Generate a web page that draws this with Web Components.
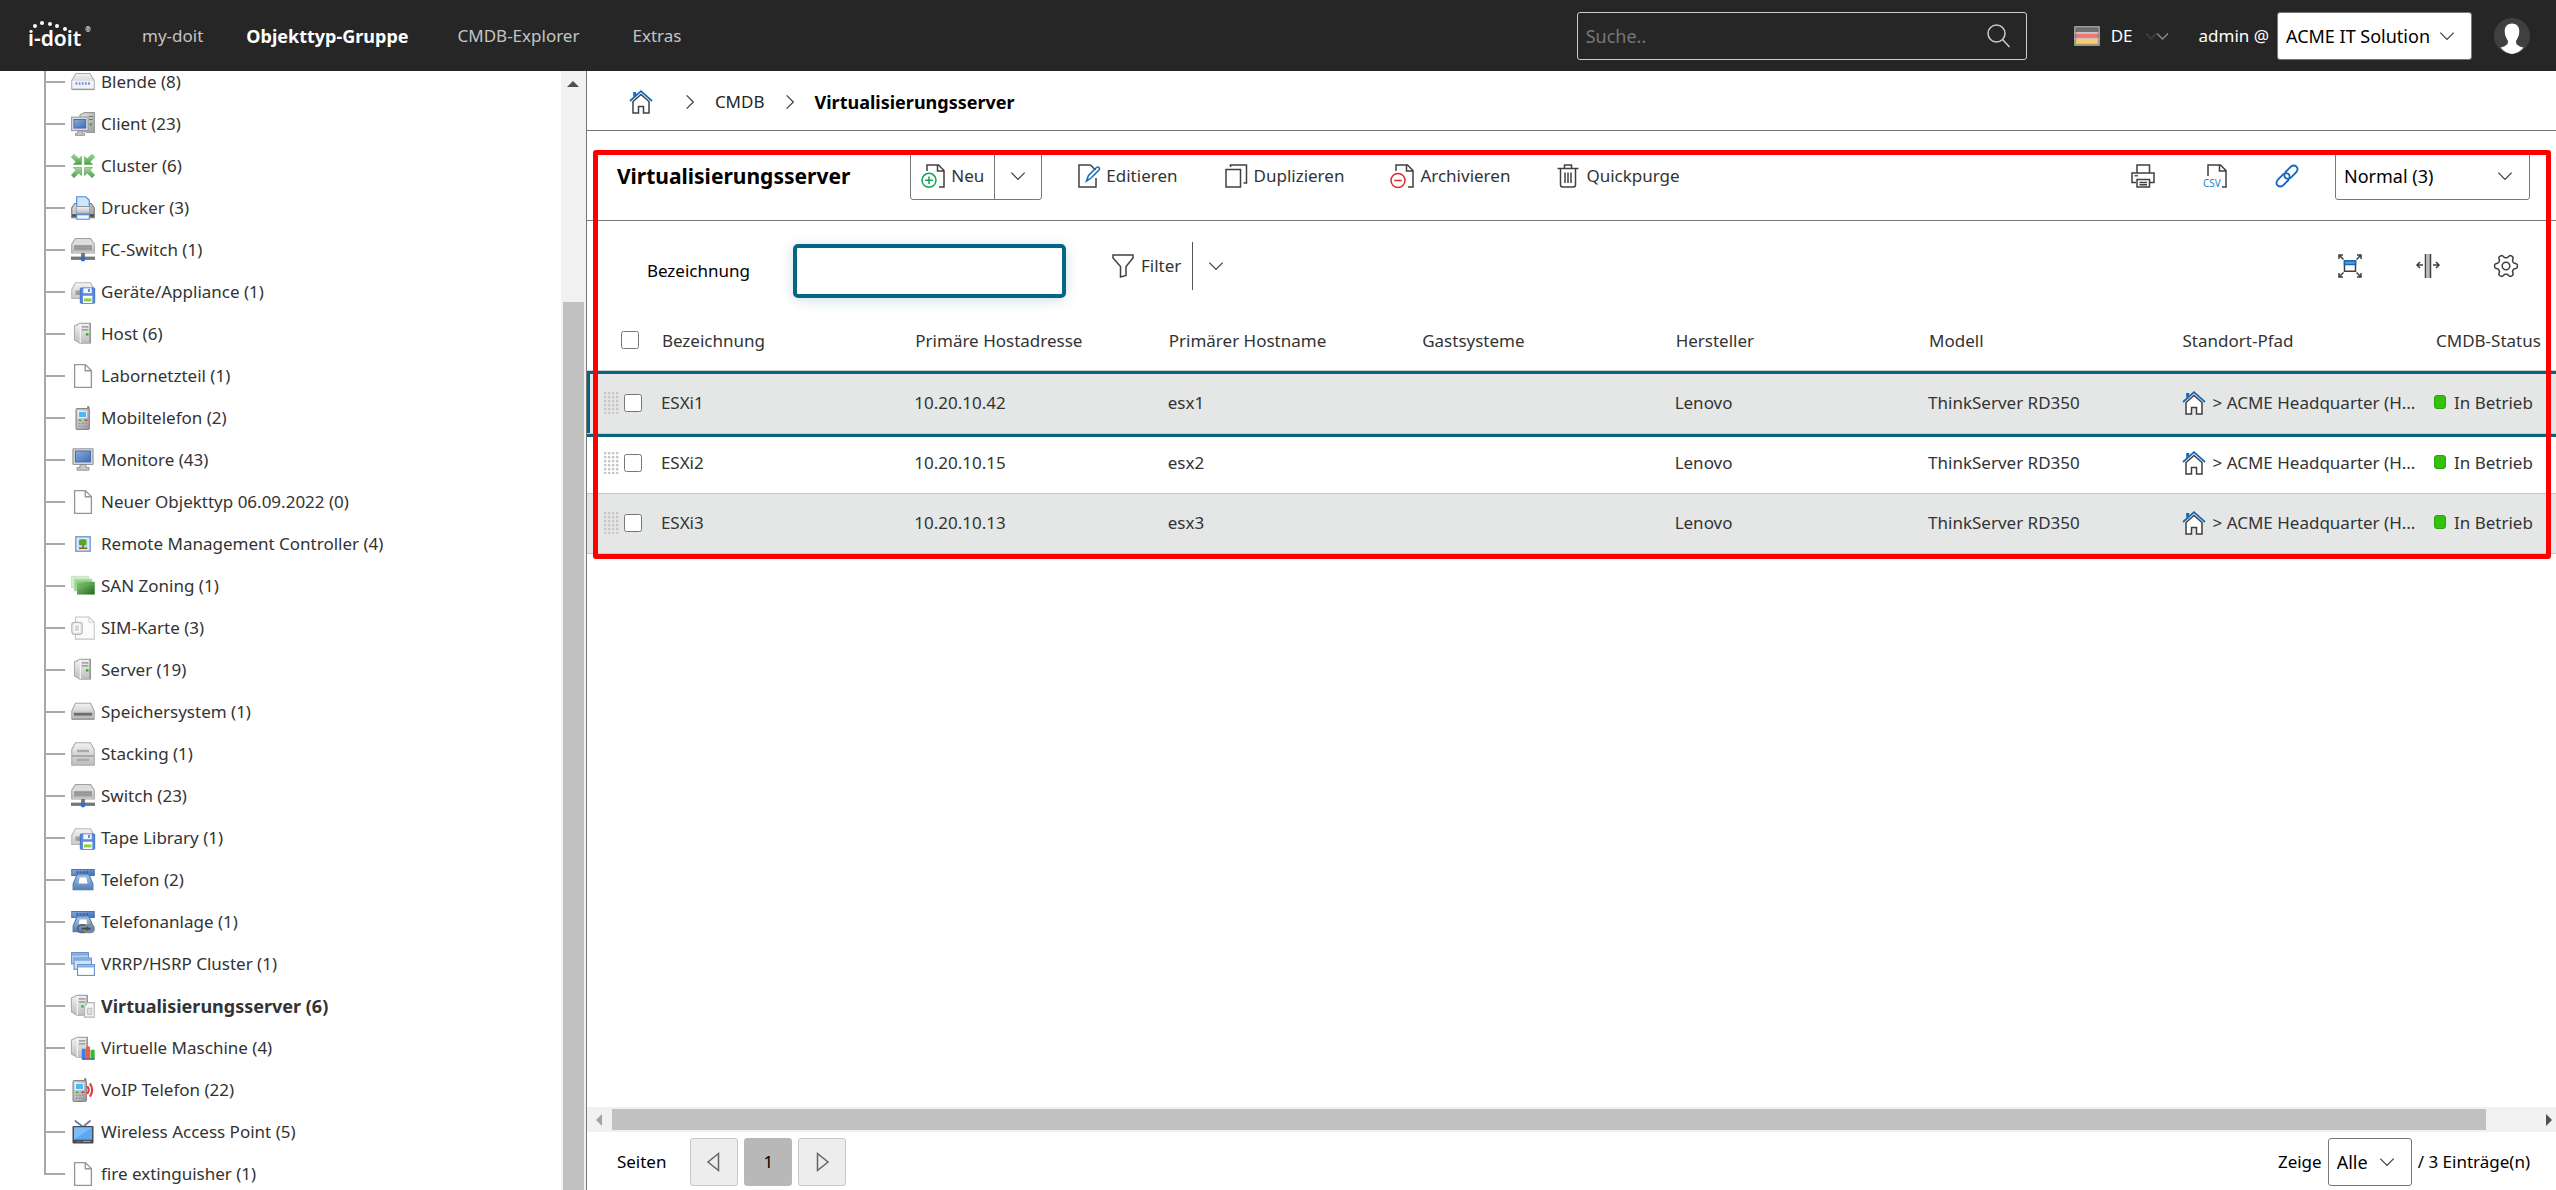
<!DOCTYPE html>
<html lang="de">
<head>
<meta charset="utf-8">
<meta name="viewport" content="width=device-width, initial-scale=1">
<title>i-doit - Virtualisierungsserver</title>
<style>
  html, body {
    height: 100%;
  }
  body {
    margin: 0;
    display: flex;
    flex-direction: column;
    overflow: hidden;
    background: #fff;
    color: #000;
    font-family: "Noto Sans", "Open Sans", sans-serif;
    font-size: 17px;
    line-height: 24px;
  }
</style>
</head>
<body>

<app-header></app-header>

<app-layout>
  <object-tree slot="sidebar">
    <tree-item icon="panel">Blende (8)</tree-item>
    <tree-item icon="client">Client (23)</tree-item>
    <tree-item icon="cluster">Cluster (6)</tree-item>
    <tree-item icon="printer-color">Drucker (3)</tree-item>
    <tree-item icon="switch">FC-Switch (1)</tree-item>
    <tree-item icon="drive-disk">Geräte/Appliance (1)</tree-item>
    <tree-item icon="server">Host (6)</tree-item>
    <tree-item icon="page">Labornetzteil (1)</tree-item>
    <tree-item icon="mobile">Mobiltelefon (2)</tree-item>
    <tree-item icon="monitor">Monitore (43)</tree-item>
    <tree-item icon="page">Neuer Objekttyp 06.09.2022 (0)</tree-item>
    <tree-item icon="remote">Remote Management Controller (4)</tree-item>
    <tree-item icon="zoning">SAN Zoning (1)</tree-item>
    <tree-item icon="sim">SIM-Karte (3)</tree-item>
    <tree-item icon="server">Server (19)</tree-item>
    <tree-item icon="drive">Speichersystem (1)</tree-item>
    <tree-item icon="stack">Stacking (1)</tree-item>
    <tree-item icon="switch">Switch (23)</tree-item>
    <tree-item icon="drive-disk">Tape Library (1)</tree-item>
    <tree-item icon="phone">Telefon (2)</tree-item>
    <tree-item icon="phone-link">Telefonanlage (1)</tree-item>
    <tree-item icon="windows">VRRP/HSRP Cluster (1)</tree-item>
    <tree-item icon="server-card" active>Virtualisierungsserver (6)</tree-item>
    <tree-item icon="server-chart">Virtuelle Maschine (4)</tree-item>
    <tree-item icon="mobile-sound">VoIP Telefon (22)</tree-item>
    <tree-item icon="tv">Wireless Access Point (5)</tree-item>
    <tree-item icon="page" last>fire extinguisher (1)</tree-item>
  </object-tree>

  <bread-crumb></bread-crumb>
  <highlight-frame>
    <object-toolbar></object-toolbar>
    <filter-bar></filter-bar>
    <object-table></object-table>
  </highlight-frame>
  <h-scrollbar></h-scrollbar>
  <page-footer></page-footer>
</app-layout>

<script>
  // gradients shared by the small object type icons
  const DEFS = `
    <defs>
      <linearGradient id="g" x1="0" y1="0" x2="0" y2="1"><stop offset="0" stop-color="#f2f2f2"/><stop offset="1" stop-color="#bdbdbd"/></linearGradient>
      <linearGradient id="m" x1="0" y1="0" x2="1" y2="1"><stop offset="0" stop-color="#e4e4e4"/><stop offset="1" stop-color="#9b9b9b"/></linearGradient>
      <linearGradient id="b" x1="0" y1="0" x2="1" y2="1"><stop offset="0" stop-color="#87aade"/><stop offset="1" stop-color="#3f6fb5"/></linearGradient>
      <linearGradient id="p" x1="0" y1="0" x2="0" y2="1"><stop offset="0" stop-color="#a9c6e6"/><stop offset="1" stop-color="#4f7fb8"/></linearGradient>
      <linearGradient id="k" x1="0" y1="0" x2="0" y2="1"><stop offset="0" stop-color="#9fdc9a"/><stop offset="1" stop-color="#4d9e4a"/></linearGradient>
      <linearGradient id="z" x1="0" y1="0" x2="1" y2="1"><stop offset="0" stop-color="#8fca82"/><stop offset="1" stop-color="#1c6b1c"/></linearGradient>
    </defs>`;

  const SERVER = `
    <path d="M2.3 2.6 6 .9h7v13.3H6L2.3 12z" fill="url(#g)" stroke="#a9a9a9" stroke-width=".7"/>
    <path d="M6.2 1.2v12.8" stroke="#f7f7f7" stroke-width=".8"/>
    <path d="M7.2 3.3h4.4M7.2 5.3h4.4" stroke="#8d8d8d" stroke-width=".8"/>
    <path d="M12.7 1v13" stroke="#8d8d8d" stroke-width=".8"/>`;
  const MOBILE = `
    <path d="M11.5 .2v4" stroke="#6d6d6d" stroke-width="1.4"/>
    <rect x="3.4" y="1.8" width="8.8" height="13.8" rx=".8" fill="url(#m)" stroke="#868686" stroke-width=".8"/>
    <rect x="5" y="3.6" width="5.4" height="4" fill="#4db8f5" stroke="#fff" stroke-width=".5"/>
    <path d="M5 9.5h2" stroke="#35b34a"/><path d="M9 9.5h2" stroke="#d9363a"/>
    <path d="M5 11.5h1.3m.9 0h1.3m.9 0h1.3M5 13.500h1.3m.9 0h1.3m.9 0h1.3" stroke="#8c8c8c" stroke-width=".8"/>`;
  const PHONE = `
    <path d="M.5 1h15v4H12l-.5-1.3h-7L4 5H.5z" fill="url(#b)" stroke="#4a78ad" stroke-width=".7"/>
    <path d="M4 4.5h8l2.6 6v4H1.4v-4z" fill="url(#p)" stroke="#4a78ad" stroke-width=".7"/>
    <path d="M5.8 6.3h4.4l.8 4H5z" fill="#fff"/>
    <path d="M3.5 2.8h9" stroke="#2e5f9c" stroke-width="1.2" stroke-dasharray="1.2 1"/>`;
  const HOME = `
    <path d="M4 11.5V23h5.500v-6.500h5V23H20V11.500L12 4.500z" stroke="#404040" stroke-width="1.5" fill="#fff"/>
    <path d="M1 11 12 1.2 23 11" stroke="#1169bd" stroke-width="1.7" fill="none"/>
    <path d="M4.2 2h3v2.500l-3 2.600z" fill="#1169bd" stroke="none"/>`;

  // cog outline with six rounded teeth
  const GEAR = Array.from({ length: 72 }, (_, i) => {
    const a = i * Math.PI / 36;
    const r = 9.8 + 1.7 * Math.tanh(2 * Math.cos(6 * a));
    return `${i ? 'L' : 'M'}${(12 + r * Math.cos(a)).toFixed(2)} ${(12 + r * Math.sin(a)).toFixed(2)}`;
  }).join('') + 'z';

  const ICONS = {
    // object types, drawn on a 16 unit grid
    'panel': [16, `<path d="M3.4 2.3h9.2l2.9 4.7v5.8H.5V7z" fill="url(#g)" stroke="#adadad" stroke-width=".7"/><path d="M.9 7.2h14.2v5.2H.9z" fill="#f4f4f4"/><path d="M3 9h10" stroke="#6c93d8" stroke-width="1.8" stroke-dasharray="1.2 .9"/><path d="M.5 13h15" stroke="#9a9a9a" stroke-width=".8"/>`],
    'client': [16, `<path d="M6 2 9 .4h6.600v13.200H11L6 12z" fill="url(#m)" stroke="#989898" stroke-width=".7"/><path d="M12 3h2.600M12 5h2.600" stroke="#777" stroke-width=".7"/><path d="M13.200 7.500v1.500" stroke="#28b428" stroke-width="1.6"/><rect x=".4" y="3.4" width="11" height="9" fill="#dcdcdc" stroke="#999" stroke-width=".7"/><rect x="2" y="5" width="7.8" height="5.7" fill="url(#b)" stroke="#3d66a3" stroke-width=".6"/><path d="M4.500 12.500h3v1.700h1.500v1.400H3v-1.400h1.500z" fill="#c4c4c4" stroke="#858585" stroke-width=".5"/>`],
    'cluster': [16, `<g fill="url(#k)" stroke="#58a956" stroke-width=".4"><path d="M2 .2 5.200 3.300 7 1.500V7H1.500l1.800-1.800L.2 2z"/><path d="M14 .2 10.800 3.300 9 1.500V7h5.500l-1.800-1.800L15.800 2z"/><path d="M2 15.800l3.200-3.100L7 14.500V9H1.500l1.800 1.800L.2 14z"/><path d="M14 15.800l-3.200-3.100L9 14.500V9h5.500l-1.800 1.800 3.100 3.200z"/></g>`],
    'printer-color': [16, `<path d="M2.500 5h11l2 3v6.500H.5V8z" fill="url(#m)" stroke="#737373" stroke-width=".7"/><path d="M3.800 7V.5h6l2.400 2.400V7z" fill="#cfe5fb" stroke="#4b8fdb" stroke-width=".8"/><path d="M3.500 7h9v4.500h-9z" fill="url(#g)" stroke="#888" stroke-width=".5"/><path d="M.6 13h14.800" stroke="#525252" stroke-width="1.8"/><rect x="3.8" y="12.5" width="8.4" height="3" fill="#eef6ff" stroke="#4b8fdb" stroke-width=".7"/>`],
    'switch': [16, `<path d="M3 .4h10l2.500 3.600v6H.5V4z" fill="url(#g)" stroke="#a0a0a0" stroke-width=".7"/><path d="M3.400 1.200h9.200l1.400 2.300H2z" fill="#dcdcdc"/><rect x="2" y="4.600" width="12" height="3.800" fill="#a4a4a4"/><path d="M2 5.800h12M2 7.200h12" stroke="#8a8a8a" stroke-width=".5"/><path d="M.8 9.500h14.400" stroke="#c9c9c9" stroke-width=".8"/><path d="M8 10v3" stroke="#777" stroke-width="2.6"/><path d="M0 13.500h16" stroke="#777" stroke-width="2.2"/><circle cx="8" cy="14" r="1.6" fill="#2e6ae0"/>`],
    'drive-disk': [16, `<g opacity=".8"><path d="M3 1.800h10l2.500 4.500v6H.5v-6z" fill="url(#g)" stroke="#a5a5a5" stroke-width=".7"/><path d="M3 8.500h5" stroke="#888" stroke-width="3"/></g><rect x="6.2" y="5.3" width="9.6" height="10.2" rx=".5" fill="#5b8cdc" stroke="#3a6ac0" stroke-width=".6"/><path d="M8.200 5.500h5.600v3.300H8.200z" fill="#f3f7ff"/><path d="M12 6v2" stroke="#3a6ac0"/><path d="M8 10.500h6.200v4.800H8z" fill="#fff"/><path d="M8.600 13.300h5" stroke="#8ad13c" stroke-width="2"/>`],
    'server': [16, SERVER + `<path d="M10.800 7.500v1.600" stroke="#28b428" stroke-width="1.8"/>`],
    'page': [16, `<path d="M2.400 .4h7.200l4 4v11.200H2.400z" fill="#fff" stroke="#969696" stroke-width=".9"/><path d="M9.500 .5v4h4" fill="none" stroke="#969696" stroke-width=".9"/>`],
    'mobile': [16, MOBILE],
    'monitor': [16, `<rect x="1.3" y=".5" width="13.4" height="10.5" rx=".5" fill="#d4d4d4" stroke="#999" stroke-width=".8"/><rect x="3" y="2" width="10" height="7.3" fill="url(#b)" stroke="#3d66a3" stroke-width=".6"/><path d="M6 11h4v2h2v1.800H4V13h2z" fill="#c8c8c8" stroke="#808080" stroke-width=".5"/>`],
    'remote': [16, `<rect x="3.2" y="3.2" width="9.6" height="9.6" fill="#dfeafb" stroke="#7c9fd3"/><rect x="5" y="5" width="6" height="6" fill="#b9dcf0"/><rect x="5.3" y="4.9" width="5" height="4" rx="1" fill="#5aa52a"/><path d="M8 8.500V11M5.300 10.800h5.500" stroke="#8a5f22"/>`],
    'zoning': [16, `<rect x=".3" y="1.5" width="11.5" height="7.5" fill="#d5edd0" stroke="#c2e0bc" stroke-width=".5"/><rect x="2" y="3.3" width="12" height="8" fill="#9ed294" stroke="#c6e8c0" stroke-width=".6"/><rect x="4" y="5.2" width="11.8" height="8.5" fill="url(#z)"/><path d="M4.500 7h11" stroke="#5fae55" stroke-width=".5"/>`],
    'sim': [16, `<path d="M3 .6h9l3.500 3.500v11.300H3z" fill="#fbfbfb" stroke="#c4c4c4" stroke-width=".7"/><path d="M12 .6v3.600h3.500" fill="none" stroke="#cfcfcf" stroke-width=".7"/><rect x=".5" y="4.2" width="7" height="8" rx="1.8" fill="#ececec" stroke="#b9b9b9" stroke-width=".8"/><rect x="2.3" y="6" width="3.4" height="4.4" fill="#d6d6d6" stroke="#fff" stroke-width=".6"/>`],
    'drive': [16, `<path d="M3 2.200h10l2.500 5.200V12.500H.5V7.400z" fill="url(#g)" stroke="#a5a5a5" stroke-width=".7"/><path d="M1 7.800h14v4.600H1z" fill="#bdbdbd"/><path d="M2 9.500h12" stroke="#6d6d6d" stroke-width="1.8"/><path d="M.5 12.800h15" stroke="#8a8a8a" stroke-width=".8"/>`],
    'stack': [16, `<path d="M3 .5h10l2.500 4.500v10.500H.5V5z" fill="url(#g)" stroke="#a9a9a9" stroke-width=".7"/><path d="M.6 9.300h14.800" stroke="#969696" stroke-width=".9"/><path d="M4 6h8M4 12h8" stroke="#aaa" stroke-width="1.6"/>`],
    'phone': [16, PHONE],
    'phone-link': [16, PHONE + `<rect x="4.5" y="10" width="6.5" height="4.8" rx="2.2" fill="none" stroke="#666" stroke-width="1.3"/><rect x="9" y="10" width="6.3" height="4.8" rx="2.2" fill="none" stroke="#8a8a8a" stroke-width="1.3"/><path d="M7 12.400h6" stroke="#444" stroke-width="1.2"/>`],
    'windows': [16, `<g stroke="#5f8ccb" stroke-width=".7"><rect x=".4" y=".4" width="11.2" height="7.5" fill="#b7d2f3"/><rect x="2" y="4" width="11.6" height="7.5" fill="#cfe1f8"/><rect x="4.4" y="8.4" width="11.2" height="7.2" fill="#fff"/></g><path d="M.8 1.500h10.400M2.400 5.100h10.800M4.800 9.500h10.400" stroke="#7fa9e2" stroke-width="1.5"/>`],
    'server-card': [16, `<g transform="translate(-2 0)">${SERVER}</g><path d="M7.600 7.500v1.600" stroke="#28b428" stroke-width="1.4"/><path d="M9 8.200 11 5.800h4.500v9.600H9z" fill="#f5f5f5" stroke="#b5b5b5" stroke-width=".8"/><path d="M11 9.500h2.800v4.200H11z" fill="#dedede" stroke="#bbb" stroke-width=".6"/>`],
    'server-chart': [16, `<g transform="translate(-2 0)">${SERVER}</g><path d="M7.200 8.500h2.600v7H7.200z" fill="#3e7df0"/><path d="M10 7h2.700v8.500H10z" fill="#e8623e"/><path d="M13 9.200h2.800v6.300H13z" fill="#3fb43a"/><path d="M7.200 15.400h8.600" stroke="#36539c" stroke-width=".8"/>`],
    'mobile-sound': [16, `<g transform="translate(-2 0)">${MOBILE}</g><path d="M10.800 5.500q2 2.500 0 5M12.600 3.600q3 4.400 0 8.800" fill="none" stroke="#e03a3f" stroke-width="1.4"/>`],
    'tv': [16, `<path d="M2.500 .3 7.500 4.200M13 .3 8.500 4.200" stroke="#6c7fa0" stroke-width="1.2"/><rect x="1" y="4" width="14" height="11.6" rx=".5" fill="#4b4b52"/><rect x="2" y="4.9" width="12" height="8.2" fill="#5aa9f2"/><path d="M2 13V5h12z" fill="#7bbdf8"/><path d="M4 14.300h3" stroke="#d33" stroke-width=".8"/><path d="M8 14.300h5" stroke="#999" stroke-width=".8"/>`],

    // line icons on a 24 unit grid
    'home': [24, HOME],
    'chevron-right': [24, `<path d="M8 4 16 12l-8 8"/>`],
    'chevron-down': [24, `<path d="M4 8 12 16 20 8"/>`],
    'chevron-lang': [24, `<path d="M1 9.500 6 15l5-5.500" stroke="#444"/><path d="M12 9.500 17.500 15 23 9.500" stroke="#888"/>`],
    'search': [24, `<circle cx="10.5" cy="9.5" r="8.5"/><path d="M16.500 15.500 23.500 23"/>`],
    'doc-new': [24, `<path d="M6 7V1h11.500L23 6.500V23h-5M16.500 1v6H23"/><g stroke="#0ba84e"><circle cx="8" cy="16.3" r="7"/><path d="M8 12.500v7.600M4.200 16.300h7.600"/></g>`],
    'doc-archive': [24, `<path d="M6 7V1h11.500L23 6.500V23h-5M16.500 1v6H23"/><g stroke="#dc2b2b"><circle cx="8" cy="16.5" r="7"/><path d="M4.200 16.500h7.600"/></g>`],
    'doc-edit': [24, `<path d="M14.500 1H3v22h17V14M14.500 1l5 5"/><path d="m10.500 17 2-5.500 8-8q1.500-1 2.500 0t0 2.500l-8 8z" stroke="#1169bd"/>`],
    'copy': [24, `<path d="M2 5.500h14.500v17.500H2zM6.500 3V1h16v18h-3"/>`],
    'trash': [24, `<path d="M1.500 4.500h21M8.500 4V1h7V4M4.500 5v15.500q0 2.500 2 2.500h11q2 0 2-2.500V5M9 8.500v10.500M12 8.500v10.500M15 8.500v10.500"/>`],
    'printer': [24, `<path d="M6 9V1h12.500v8M5 18.500H1V9h22v9.500h-4M6 15.500h12.500v7.500H6zM8.500 18.500h7.500M8.500 20.800h7.500"/><path d="M3.500 11.700H7" stroke="#1169bd"/>`],
    'link': [24, `<g stroke="#1169bd" stroke-width="1.8"><path d="m10 8.500 6-6q2.800-2 5.300 0t0 5.700l-5.600 5.600q-2.700 2-5.400 0-1.500-1.800-.6-4"/><path d="m14 15.500-6 6q-2.800 2-5.300 0t0-5.700l5.600-5.600q2.700-2 5.400 0 1.500 1.800.6 4"/></g>`],
    'filter': [24, `<path d="M2 1h20v3L15 12.500v9L9.500 23V12.500L2 4z"/>`],
    'expand': [24, `<path d="M6.500 7h11v10.300h-11z"/><path d="M6.500 7h11v3.500h-11z" fill="#5d9edb" stroke="#1169bd"/><path d="M1 5V1h4M1 1l4.500 4.500M19 1h4v4M23 1l-4.500 4.500M1 19v4h4M1 23l4.500-4.500M19 23h4v-4M23 23l-4.500-4.500"/>`],
    'columns': [24, `<path d="M10.500 0h4v24h-4z" fill="#bbb" stroke="none"/><path d="M9.500 0v24M14.500 0v24M7 11H1M4 8l-3 3 3 3M17 11h6M20 8l3 3-3 3"/>`],
    'gear': [24, `<path d="${GEAR}" stroke-linejoin="round"/><circle cx="12" cy="12" r="3.8"/>`],
    'prev': [24, `<path d="M16.500 3.500v17L6 12z" stroke="#666"/>`],
    'next': [24, `<path d="M7.500 3.500v17L18 12z" stroke="#666"/>`],
    'csv': [24, `<path d="M5 12V1h12.500L23 6.500V23h-4M16.500 1v6H23"/><text x="0" y="23" font-size="10" fill="#1a86cf" stroke="none">CSV</text>`],
    'flag': [24, `<path d="M0 3h24v6H0z" fill="#707070"/><path d="M0 9h24v6H0z" fill="#f2757a"/><path d="M0 15h24v6H0z" fill="#f6cf6c"/><path d="M.5 3.500h23v17H.5z" fill="none" stroke="#000" stroke-opacity=".25"/>`],
    'avatar': [36, `<circle cx="18" cy="18" r="18" fill="#404040"/><path d="M18 5.500c5 0 7.500 3.500 7.300 8.500-.2 4-1.800 6.500-3.300 9 0 3 1 5 7.500 6.500A18 18 0 0 1 18 36 18 18 0 0 1 6.500 29.500C13 28 14 26 14 23c-1.500-2.500-3.100-5-3.300-9-.2-5 2.300-8.500 7.300-8.500z" fill="#fff"/>`]
  };

  class AppIcon extends HTMLElement {
    connectedCallback() {
      const [grid, shapes] = ICONS[this.getAttribute('name')];
      this.attachShadow({ mode: 'open' });
      this.shadowRoot.innerHTML = `
        <style>
          :host {
            display: inline-block;
            flex: none;
            width: var(--icon-size, 24px);
            height: var(--icon-size, 24px);
          }
          svg {
            display: block;
            width: 100%;
            height: 100%;
            overflow: visible;
          }
          .line {
            fill: none;
            stroke: var(--icon-color, #404040);
            stroke-width: 1.5px;
          }
        </style>
        <svg viewBox="0 0 ${grid} ${grid}" class="${grid === 24 ? 'line' : ''}" aria-hidden="true">
          ${grid === 16 ? DEFS : ''}${shapes}
        </svg>
      `;
    }
  }
  customElements.define('app-icon', AppIcon);

  class SelectBox extends HTMLElement {
    connectedCallback() {
      this.attachShadow({ mode: 'open' });
      this.shadowRoot.innerHTML = `
        <style>
          :host {
            display: inline-grid;
            align-items: center;
            --icon-size: 20px;
          }
          select, app-icon {
            grid-area: 1 / 1;
          }
          select {
            appearance: none;
            box-sizing: border-box;
            width: 100%;
            height: 48px;
            padding: 0 40px 0 8px;
            border: 1px solid #777;
            border-radius: 3px;
            background: #fff;
            color: #000;
            font: inherit;
            font-size: 18px;
          }
          app-icon {
            justify-self: end;
            margin-right: 15px;
            pointer-events: none;
          }
        </style>
        <select aria-label="${this.getAttribute('label')}">
          <option>${this.getAttribute('value')}</option>
        </select>
        <app-icon name="chevron-down"></app-icon>
      `;
    }
  }
  customElements.define('select-box', SelectBox);

  class AppLogo extends HTMLElement {
    connectedCallback() {
      this.attachShadow({ mode: 'open' });
      this.shadowRoot.innerHTML = `
        <style>
          :host {
            display: block;
          }
          a {
            display: block;
            color: #fff;
          }
          svg {
            display: block;
            overflow: visible;
          }
          text {
            font-family: "Noto Sans", sans-serif;
            font-weight: 600;
          }
        </style>
        <a href="#" aria-label="i-doit">
          <svg width="64" height="40" viewBox="0 -4 64 40" fill="#fff">
            <circle cx="7" cy="6" r="2"/>
            <circle cx="14" cy="3" r="2"/>
            <circle cx="22" cy="4" r="2"/>
            <circle cx="29" cy="6" r="2"/>
            <circle cx="37" cy="9" r="2"/>
            <text x="0" y="26" font-size="21">i-doit</text>
            <text x="57" y="12" font-size="7">®</text>
          </svg>
        </a>
      `;
    }
  }
  customElements.define('app-logo', AppLogo);

  class AppHeader extends HTMLElement {
    connectedCallback() {
      this.attachShadow({ mode: 'open' });
      this.shadowRoot.innerHTML = `
        <style>
          :host {
            display: flex;
            align-items: center;
            flex: none;
            height: 71px;
            padding: 0 26px 0 28px;
            background: #262626;
            color: #fff;
            --icon-color: #ccc;
          }
          nav {
            display: flex;
            gap: 53px;
            margin-left: 50px;
          }
          nav a {
            color: #c4c4c4;
            text-decoration: none;
          }
          nav a.active {
            margin: 0 -4px 0 -10px;
            color: #fff;
            font-size: 18px;
            font-weight: bold;
          }
          .search {
            display: flex;
            align-items: center;
            box-sizing: border-box;
            width: 450px;
            height: 48px;
            margin-left: auto;
            padding: 0 16px 0 8px;
            border: 1px solid #ccc;
            border-radius: 3px;
          }
          .search input {
            flex: 1;
            min-width: 0;
            border: 0;
            padding: 0;
            outline: 0;
            background: none;
            color: #fff;
            font: inherit;
            font-size: 18px;
          }
          .search input::placeholder {
            color: #777;
          }
          button {
            display: flex;
            align-items: center;
            padding: 0;
            border: 0;
            background: none;
            color: inherit;
            font: inherit;
          }
          .lang {
            gap: 12px;
            margin-left: 48px;
          }
          .user {
            margin: 0 8px 0 30px;
          }
          .tenant {
            width: 195px;
            margin-right: 22px;
            --icon-color: #404040;
          }
          .avatar {
            --icon-size: 36px;
          }
        </style>
        <app-logo></app-logo>
        <nav>
          <a href="#">my-doit</a>
          <a href="#" class="active">Objekttyp-Gruppe</a>
          <a href="#">CMDB-Explorer</a>
          <a href="#">Extras</a>
        </nav>
        <div class="search">
          <input type="text" placeholder="Suche.." aria-label="Suche">
          <button aria-label="Suchen"><app-icon name="search"></app-icon></button>
        </div>
        <button class="lang"><app-icon name="flag"></app-icon>DE<app-icon name="chevron-lang"></app-icon></button>
        <span class="user">admin @</span>
        <select-box class="tenant" label="Mandant" value="ACME IT Solutions"></select-box>
        <button class="avatar" aria-label="Profil"><app-icon name="avatar"></app-icon></button>
      `;
    }
  }
  customElements.define('app-header', AppHeader);

  class AppLayout extends HTMLElement {
    connectedCallback() {
      this.attachShadow({ mode: 'open' });
      this.shadowRoot.innerHTML = `
        <style>
          :host {
            display: flex;
            flex: 1;
            min-height: 0;
          }
          aside {
            display: flex;
            width: calc(23% - 2px);
            border-right: 1px solid #777;
          }
          main {
            display: flex;
            flex: 1;
            flex-direction: column;
            min-width: 0;
          }
        </style>
        <aside><slot name="sidebar"></slot></aside>
        <main><slot></slot></main>
      `;
    }
  }
  customElements.define('app-layout', AppLayout);

  class ObjectTree extends HTMLElement {
    connectedCallback() {
      this.attachShadow({ mode: 'open' });
      this.shadowRoot.innerHTML = `
        <style>
          :host {
            display: flex;
            flex: 1;
            min-width: 0;
            overflow: hidden;
          }
          nav {
            flex: 1;
            margin-top: -10px;
            padding-left: 44px;
          }
          .bar {
            display: flex;
            flex-direction: column;
            align-items: center;
            width: 25px;
            background: #f1f1f1;
          }
          .up {
            margin: 10px 0 215px;
            border: 6px solid transparent;
            border-top: 0;
            border-bottom-color: #505050;
          }
          .thumb {
            flex: 1;
            width: 21px;
            background: #c1c1c1;
          }
        </style>
        <nav><slot></slot></nav>
        <div class="bar"><span class="up"></span><span class="thumb"></span></div>
      `;
    }
  }
  customElements.define('object-tree', ObjectTree);

  class TreeItem extends HTMLElement {
    connectedCallback() {
      this.attachShadow({ mode: 'open' });
      this.shadowRoot.innerHTML = `
        <style>
          :host {
            display: flex;
            height: 42px;
          }
          :host([active]) a {
            font-size: 18px;
            font-weight: bold;
          }
          .branch {
            display: flex;
            flex-direction: column;
            width: 21px;
            margin-right: 6px;
          }
          .branch i {
            height: 20px;
            border-left: 2px solid #a8a8a8;
          }
          .branch i:first-child {
            border-bottom: 2px solid #a8a8a8;
          }
          :host([last]) i:last-child {
            border-color: transparent;
          }
          a {
            display: flex;
            align-items: center;
            gap: 6px;
            color: #333;
            text-decoration: none;
          }
        </style>
        <span class="branch"><i></i><i></i></span>
        <a href="#"><app-icon name="${this.getAttribute('icon')}"></app-icon><span><slot></slot></span></a>
      `;
    }
  }
  customElements.define('tree-item', TreeItem);

  class BreadCrumb extends HTMLElement {
    connectedCallback() {
      this.attachShadow({ mode: 'open' });
      this.shadowRoot.innerHTML = `
        <style>
          :host {
            display: flex;
            align-items: center;
            flex: none;
            box-sizing: border-box;
            height: 60px;
            padding: 2px 42px 0;
            border-bottom: 1px solid #777;
          }
          a {
            color: #262626;
            text-decoration: none;
          }
          .home {
            display: flex;
            margin-right: 27px;
          }
          .sep {
            --icon-size: 20px;
            margin-right: 15px;
          }
          .sep + a {
            margin-right: 15px;
          }
          b {
            font-size: 18px;
          }
        </style>
        <a href="#" class="home" aria-label="Startseite"><app-icon name="home"></app-icon></a>
        <app-icon class="sep" name="chevron-right"></app-icon>
        <a href="#">CMDB</a>
        <app-icon class="sep" name="chevron-right"></app-icon>
        <b>Virtualisierungsserver</b>
      `;
    }
  }
  customElements.define('bread-crumb', BreadCrumb);

  class HighlightFrame extends HTMLElement {
    connectedCallback() {
      this.attachShadow({ mode: 'open' });
      this.shadowRoot.innerHTML = `
        <style>
          :host {
            display: block;
            position: relative;
            margin-bottom: auto;
          }
          .frame {
            position: absolute;
            inset: 19px 5px -5px 6px;
            border: 5px solid #f00;
            border-radius: 3px;
            pointer-events: none;
          }
        </style>
        <slot></slot>
        <div class="frame"></div>
      `;
    }
  }
  customElements.define('highlight-frame', HighlightFrame);

  class ToolButton extends HTMLElement {
    connectedCallback() {
      this.attachShadow({ mode: 'open' });
      this.shadowRoot.innerHTML = `
        <style>
          :host {
            display: inline-flex;
          }
          button {
            display: flex;
            align-items: center;
            gap: 6px;
            height: 48px;
            padding: 0;
            border: 0;
            background: none;
            color: #333;
            font: inherit;
          }
        </style>
        <button ${this.hasAttribute('label') ? `aria-label="${this.getAttribute('label')}"` : ''}>
          <app-icon name="${this.getAttribute('icon')}"></app-icon>
          <slot></slot>
        </button>
      `;
    }
  }
  customElements.define('tool-button', ToolButton);

  class ObjectToolbar extends HTMLElement {
    connectedCallback() {
      this.attachShadow({ mode: 'open' });
      this.shadowRoot.innerHTML = `
        <style>
          :host {
            display: flex;
            align-items: center;
            box-sizing: border-box;
            height: 90px;
            padding: 0 26px 0 30px;
            border-bottom: 1px solid #777;
          }
          h1 {
            margin: 0 60px 0 0;
            font-size: 21px;
          }
          .split {
            display: flex;
            align-items: center;
            box-sizing: border-box;
            height: 48px;
            margin-right: 34px;
            border: 1px solid #777;
            border-radius: 3px;
          }
          .split tool-button {
            padding: 0 10px;
          }
          .split tool-button + tool-button {
            align-items: center;
            width: 20px;
            height: 46px;
            padding: 0 13px;
            border-left: 1px solid #777;
            --icon-size: 20px;
          }
          .actions {
            display: flex;
            gap: 46px;
          }
          .tools {
            display: flex;
            gap: 48px;
            margin-left: auto;
          }
          .tools select-box {
            width: 195px;
            margin-left: -12px;
          }
        </style>
        <h1>Virtualisierungsserver</h1>
        <div class="split">
          <tool-button icon="doc-new">Neu</tool-button>
          <tool-button icon="chevron-down" label="Weitere"></tool-button>
        </div>
        <div class="actions">
          <tool-button icon="doc-edit">Editieren</tool-button>
          <tool-button icon="copy">Duplizieren</tool-button>
          <tool-button icon="doc-archive">Archivieren</tool-button>
          <tool-button icon="trash">Quickpurge</tool-button>
        </div>
        <div class="tools">
          <tool-button icon="printer" label="Drucken"></tool-button>
          <tool-button icon="csv" label="Exportieren"></tool-button>
          <tool-button icon="link" label="Link"></tool-button>
          <select-box label="Status" value="Normal (3)"></select-box>
        </div>
      `;
    }
  }
  customElements.define('object-toolbar', ObjectToolbar);

  class FilterBar extends HTMLElement {
    connectedCallback() {
      this.attachShadow({ mode: 'open' });
      this.shadowRoot.innerHTML = `
        <style>
          :host {
            display: flex;
            align-items: center;
            height: 90px;
            padding: 0 38px 0 60px;
          }
          .field {
            display: flex;
            align-items: center;
            gap: 43px;
            padding-top: 10px;
          }
          input {
            box-sizing: border-box;
            width: 273px;
            height: 54px;
            padding: 0 10px;
            border: 4px solid #056583;
            border-radius: 5px;
            outline: 0;
            box-shadow: 0 2px 14px rgba(5, 101, 131, .2);
            font: inherit;
          }
          .filter {
            margin-left: 45px;
            padding-right: 11px;
            border-right: 1px solid #555;
          }
          .more {
            margin-left: 13px;
            --icon-size: 20px;
          }
          .tools {
            display: flex;
            gap: 54px;
            margin-left: auto;
          }
        </style>
        <div class="field">
          <label for="name">Bezeichnung</label>
          <input id="name" type="text">
        </div>
        <tool-button class="filter" icon="filter">Filter</tool-button>
        <tool-button class="more" icon="chevron-down" label="Weitere Filter"></tool-button>
        <div class="tools">
          <tool-button icon="expand" label="Vollbild"></tool-button>
          <tool-button icon="columns" label="Spaltenbreite"></tool-button>
          <tool-button icon="gear" label="Einstellungen"></tool-button>
        </div>
      `;
    }
  }
  customElements.define('filter-bar', FilterBar);

  class ObjectTable extends HTMLElement {
    connectedCallback() {
      const columns = ['Bezeichnung', 'Primäre Hostadresse', 'Primärer Hostname', 'Gastsysteme', 'Hersteller', 'Modell', 'Standort-Pfad', 'CMDB-Status'];
      const rows = [
        ['ESXi1', '10.20.10.42', 'esx1'],
        ['ESXi2', '10.20.10.15', 'esx2'],
        ['ESXi3', '10.20.10.13', 'esx3']
      ];
      this.attachShadow({ mode: 'open' });
      this.shadowRoot.innerHTML = `
        <style>
          :host {
            display: block;
            overflow: hidden;
          }
          table {
            table-layout: fixed;
            width: calc(100% + 48px);
            border-spacing: 0;
            color: #333;
          }
          th {
            height: 59px;
            padding: 0 0 0 16px;
            border-bottom: 1px solid #ccc;
            font-weight: normal;
            text-align: left;
          }
          .check {
            width: 59px;
            padding: 0;
          }
          th:last-child {
            width: 168px;
          }
          /* keeps the selection outline clear of the header line */
          tbody::before {
            content: "";
            display: block;
            height: 3px;
          }
          td {
            height: 58px;
            padding: 0 8px 1px 15px;
            border-bottom: 1px solid #c8c8c8;
            white-space: nowrap;
            overflow: hidden;
            text-overflow: ellipsis;
          }
          tbody tr:nth-child(odd) {
            background: #e5e7e6;
          }
          tbody tr:first-child {
            outline: 3px solid #056583;
          }
          tbody tr:first-child .check {
            box-shadow: inset 3px 0 #056583;
          }
          .pick {
            display: flex;
            align-items: center;
            justify-content: flex-end;
            gap: 4px;
            padding-right: 4px;
            padding-bottom: 2px;
          }
          th .pick {
            padding-right: 7px;
          }
          .grip {
            width: 16px;
            height: 22px;
            background: radial-gradient(circle at 1px 1px, #c8c8c8 1px, transparent 2px) 0 0 / 4px 4px;
          }
          input {
            width: 18px;
            height: 18px;
            margin: 0;
          }
          .path {
            display: flex;
            align-items: center;
            gap: 7px;
          }
          .path span {
            overflow: hidden;
            text-overflow: ellipsis;
          }
          td.loc {
            padding-left: 15px;
            padding-right: 0;
          }
          td.status {
            padding-left: 14px;
          }
          .dot {
            display: inline-block;
            width: 10px;
            height: 12px;
            margin-right: 8px;
            border: 1px solid #2ba30d;
            border-radius: 3px;
            background: #33c10d;
          }
        </style>
        <table>
          <thead>
            <tr>
              <th class="check"><div class="pick"><input type="checkbox" aria-label="Alle auswählen"></div></th>
              ${columns.map(name => `<th>${name}</th>`).join('')}
            </tr>
          </thead>
          <tbody>
            ${rows.map(([title, ip, host]) => `
            <tr>
              <td class="check"><div class="pick"><span class="grip"></span><input type="checkbox" aria-label="${title} auswählen"></div></td>
              <td>${title}</td>
              <td>${ip}</td>
              <td>${host}</td>
              <td></td>
              <td>Lenovo</td>
              <td>ThinkServer RD350</td>
              <td class="loc"><div class="path"><app-icon name="home"></app-icon><span>&gt; ACME Headquarter (H...</span></div></td>
              <td class="status"><span class="dot"></span>In Betrieb</td>
            </tr>`).join('')}
          </tbody>
        </table>
      `;
    }
  }
  customElements.define('object-table', ObjectTable);

  class HScrollbar extends HTMLElement {
    connectedCallback() {
      this.attachShadow({ mode: 'open' });
      this.shadowRoot.innerHTML = `
        <style>
          :host {
            display: flex;
            align-items: center;
            flex: none;
            height: 25px;
            padding: 0 4px 0 9px;
            background: #f1f1f1;
          }
          i {
            border: 6px solid transparent;
          }
          .left {
            border-left: 0;
            border-right-color: #a3a3a3;
          }
          .thumb {
            flex: 1;
            height: 21px;
            margin: 0 60px 0 10px;
            background: #c1c1c1;
          }
          .right {
            border-right: 0;
            border-left-color: #505050;
          }
        </style>
        <i class="left"></i><span class="thumb"></span><i class="right"></i>
      `;
    }
  }
  customElements.define('h-scrollbar', HScrollbar);

  class PageFooter extends HTMLElement {
    connectedCallback() {
      this.attachShadow({ mode: 'open' });
      this.shadowRoot.innerHTML = `
        <style>
          :host {
            display: flex;
            align-items: center;
            flex: none;
            box-sizing: border-box;
            gap: 6px;
            height: 58px;
            padding: 2px 26px 0 30px;
          }
          .label {
            margin-right: 18px;
          }
          button {
            display: grid;
            place-items: center;
            box-sizing: border-box;
            width: 48px;
            height: 48px;
            padding: 0;
            border: 1px solid #c8c8c8;
            border-radius: 3px;
            background: #ededed;
            color: #000;
            font: inherit;
          }
          .current {
            border-color: #b8b8b8;
            background: #b8b8b8;
          }
          .count {
            margin-left: auto;
          }
          select-box {
            width: 84px;
          }
        </style>
        <span class="label">Seiten</span>
        <button aria-label="Zurück"><app-icon name="prev"></app-icon></button>
        <button class="current">1</button>
        <button aria-label="Weiter"><app-icon name="next"></app-icon></button>
        <span class="count">Zeige</span>
        <select-box label="Einträge pro Seite" value="Alle"></select-box>
        <span>/ 3 Einträge(n)</span>
      `;
    }
  }
  customElements.define('page-footer', PageFooter);
</script>
</body>
</html>
